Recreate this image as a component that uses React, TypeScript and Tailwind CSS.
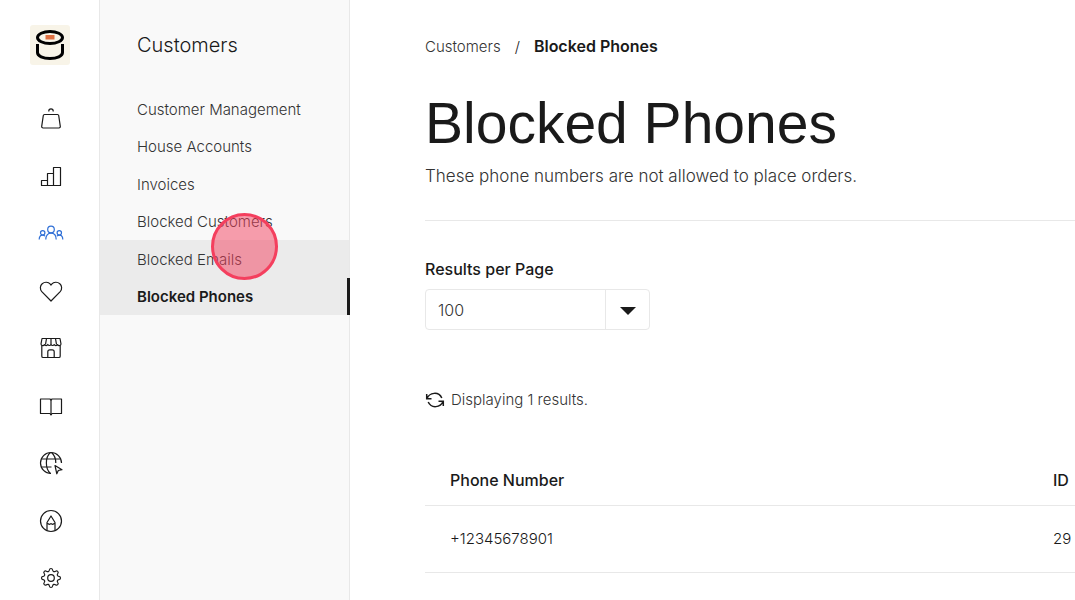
import type { ReactNode } from 'react';

interface RailItem {
  label: string;
  active?: boolean;
  icon: ReactNode;
}

const railItems: RailItem[] = [
  {
    label: 'Orders',
    icon: (
      <>
        <path d="M5.5 8.5h13a1.2 1.2 0 0 1 1.2 1l1.6 10.8a1.4 1.4 0 0 1-1.4 1.7H4.1a1.4 1.4 0 0 1-1.4-1.7L4.3 9.5a1.2 1.2 0 0 1 1.2-1z" />
        <path d="M9.8 5.5V5a2.2 2.2 0 0 1 4.4 0v.5" />
      </>
    ),
  },
  {
    label: 'Reports',
    icon: <path d="M2.5 16.5h6v5h-6zM8.5 9.5h6v12h-6zM14.5 3.5h7v18h-7z" />,
  },
  {
    label: 'Customers',
    active: true,
    icon: (
      <>
        <circle cx="12" cy="8.5" r="3.3" />
        <path d="M6.8 18.5c0-4 2-6.3 5.2-6.3s5.2 2.3 5.2 6.3" />
        <circle cx="3.7" cy="11.8" r="2.2" />
        <path d="M.2 18.5c0-2.5 1-4.3 3.3-4.3 1.2 0 2 .4 2.5 1" />
        <circle cx="20.3" cy="11.8" r="2.2" />
        <path d="M23.8 18.5c0-2.5-1-4.3-3.3-4.3-1.2 0-2 .4-2.5 1" />
      </>
    ),
  },
  {
    label: 'Loyalty',
    icon: <path d="M12 22 2.8 12.7C.7 10.3 1 6.6 3.2 4.7c2.4-2.1 6-1.9 8.1.5l.7.9.7-.9c2.1-2.4 5.7-2.6 8.1-.5 2.2 1.9 2.5 5.6.4 8z" />,
  },
  {
    label: 'Store',
    icon: (
      <>
        <path d="M3 2.5h18l1 5.5a1.8 1.8 0 0 1-3.5.5 1.8 1.8 0 0 1-3.3 0 1.8 1.8 0 0 1-3.2 0 1.8 1.8 0 0 1-3.2 0 1.8 1.8 0 0 1-3.3 0A1.8 1.8 0 0 1 2 8z" />
        <path d="M7.5 2.5l-1 6M12 2.5v6M16.5 2.5l1 6" />
        <path d="M2.8 9.5v10.7c0 .8.5 1.3 1.3 1.3h15.8c.8 0 1.3-.5 1.3-1.3V9.5" />
        <path d="M8.8 21.5v-5.7c0-1.3.8-2 2-2h2.4c1.2 0 2 .7 2 2v5.7" />
      </>
    ),
  },
  {
    label: 'Menu',
    icon: (
      <>
        <path d="M1.5 5H11l1 1 1-1h9.5v14.500H13l-1 1.500-1-1.500H1.500z" />
        <path d="M12 6v15" />
      </>
    ),
  },
  {
    label: 'Website',
    icon: (
      <>
        <path d="M12 22.5A10.5 10.5 0 1 1 22.5 12" />
        <path d="M11.5 22.5C6 18 6 6 11.5 1.5M12.5 1.5c3 2.6 4.3 6.2 4.3 10.5M2.3 8h19.4M1.8 16h10.7" />
        <path d="M16 14.5l7 4.2-3.7.8-1.5 3.3z" />
      </>
    ),
  },
  {
    label: 'Design',
    icon: (
      <>
        <circle cx="12" cy="12" r="10.5" />
        <path d="M8 21.5v-8L12 7l4 6.5v8" />
        <path d="M8 14.5c1.3 0 1.3.8 2.7.8.7 0 .7-.8 1.3-.8s.6.8 1.3.8c1.4 0 1.4-.8 2.7-.8" />
      </>
    ),
  },
  {
    label: 'Settings',
    icon: (
      <>
        <circle cx="12" cy="12" r="3.3" />
        <path d="M10.4 3c.3-2 2.900-2 3.200 0 .3 1.700 1.500 2.200 2.900 1.200 1.600-1.200 3.500.700 2.300 2.300-1 1.400-.5 2.600 1.200 2.900 2 .3 2 2.900 0 3.200-1.700.3-2.200 1.500-1.200 2.900 1.200 1.600-.7 3.500-2.300 2.300-1.400-1-2.600-.5-2.900 1.200-.3 2-2.900 2-3.200 0-.3-1.700-1.500-2.200-2.900-1.200-1.600 1.200-3.500-.7-2.300-2.300 1-1.400.5-2.600-1.200-2.900-2-.3-2-2.900 0-3.200 1.700-.3 2.200-1.500 1.200-2.900C4 4.900 5.900 3 7.500 4.200c1.400 1 2.600.5 2.900-1.200z" transform="translate(0 1)" />
      </>
    ),
  },
];

const customerLinks = [
  { label: 'Customer Management' },
  { label: 'House Accounts' },
  { label: 'Invoices' },
  { label: 'Blocked Customers' },
  { label: 'Blocked Emails', hovered: true },
  { label: 'Blocked Phones', active: true },
];

const blockedPhones = [{ id: 29, phone: '+12345678901' }];

function Logo() {
  return (
    <svg className="size-10" viewBox="0 0 40 40" fill="none" aria-hidden="true">
      <rect width="40" height="40" rx="3" fill="#f8f4e8" />
      <ellipse cx="20" cy="12.5" rx="12.5" ry="6" stroke="#000" strokeWidth="3" />
      <rect x="15.5" y="10" width="9" height="4.5" fill="#df7042" />
      <path d="M7.5 19v8.5c0 3.5 5.5 6 12.5 6s12.500-2.500 12.500-6V19" stroke="#000" strokeWidth="3" />
    </svg>
  );
}

function RefreshIcon() {
  return (
    <svg className="size-5" viewBox="0 0 20 20" fill="none" stroke="#1a1a1a" strokeWidth="1.5" aria-hidden="true">
      <path d="M1.7 4v4.7h4.8M2 8.5C4.5 2.5 13.5 1 16.8 8" />
      <path d="M18.3 16v-4.7h-4.8M18 11.5c-2.5 6-11.5 7.5-14.8.5" />
    </svg>
  );
}

export default function App() {
  return (
    <div className="flex min-h-screen overflow-x-hidden bg-white font-['Inter',sans-serif] text-[15px] font-light text-[#1a1a1a]">
      {/* Icon rail */}
      <aside className="flex w-[100px] shrink-0 flex-col items-center border-r border-[#e8e8e8] pt-[25px] pb-[10px] pl-px">
        <a href="#home" aria-label="Home">
          <Logo />
        </a>
        <nav aria-label="Main" className="mt-[41px] flex flex-1 flex-col justify-between pl-px">
          {railItems.map((item) => (
            <a key={item.label} href="#" aria-label={item.label} className={item.active ? 'text-[#2f6fd6]' : 'text-[#1a1a1a]'}>
              <svg
                className="size-6 overflow-visible"
                viewBox="0 0 24 24"
                fill="none"
                stroke="currentColor"
                strokeWidth="1.2"
                strokeLinejoin="round"
                aria-hidden="true"
              >
                {item.icon}
              </svg>
            </a>
          ))}
        </nav>
      </aside>

      {/* Section menu */}
      <aside className="w-[250px] shrink-0 border-r border-[#e8e8e8] bg-[#f9f9f9] pt-[30px]">
        <h2 className="px-[37px] text-xl leading-[30px]">Customers</h2>
        <nav aria-label="Customers" className="relative mt-[30px] grid h-[225px] grid-rows-6">
          {customerLinks.map((link) => (
            <a
              key={link.label}
              href="#"
              className={
                link.active
                  ? '-mr-px flex items-center border-r-3 border-[#1a1a1a] bg-[#ebebeb] pt-0.5 pl-[37px] font-semibold'
                  : link.hovered
                    ? 'flex items-center bg-[#ebebeb] pt-0.5 pl-[37px] text-[#333]'
                    : 'flex items-center pt-0.5 pl-[37px] text-[#333]'
              }
            >
              {link.label}
            </a>
          ))}
          {/* Click marker */}
          <span className="pointer-events-none absolute top-[123px] left-[111px] size-[67px] rounded-full border-3 border-[#f43f5e] bg-[#f43f5e]/50" />
        </nav>
      </aside>

      {/* Page */}
      <main className="min-w-0 flex-1 pt-[34px] pl-[75px]">
        <nav aria-label="Breadcrumb" className="flex items-baseline gap-[14px] leading-6">
          <a href="#" className="text-[#333]">Customers</a>
          <span>/</span>
          <span className="text-base leading-6 font-semibold">Blocked Phones</span>
        </nav>

        <header className="border-b border-[#e8e8e8] pb-[30px]">
          <h1 className="mt-7 font-['Liberation_Sans',sans-serif] text-[57px] leading-[72px] font-normal whitespace-nowrap">
            Blocked Phones
          </h1>
          <p className="mt-[3px] text-[17px] leading-7 text-[#333]">These phone numbers are not allowed to place orders.</p>
        </header>

        <div className="mt-9 w-[225px]">
          <label htmlFor="per-page" className="block text-base leading-6 font-medium">
            Results per Page
          </label>
          <div className="relative mt-2">
            <select
              id="per-page"
              defaultValue="100"
              className="block h-[41px] w-full appearance-none rounded-sm border border-[#e8e8e8] bg-white pl-3 text-base text-[#333]"
            >
              <option>25</option>
              <option>50</option>
              <option>100</option>
            </select>
            <span className="pointer-events-none absolute inset-y-0 right-0 flex w-[45px] items-center justify-center border-l border-[#e8e8e8]">
              <svg className="mt-0.5 h-2 w-4" viewBox="0 0 16 8" fill="#1a1a1a" aria-hidden="true">
                <path d="M0 0h16L8 8z" />
              </svg>
            </span>
          </div>
        </div>

        <div className="mt-[58px] flex items-center gap-1.5 leading-6">
          <button type="button" aria-label="Refresh">
            <RefreshIcon />
          </button>
          <p className="text-[#333]">Displaying 1 results.</p>
        </div>

        <table className="mt-[42px] w-full text-left">
          <thead className="text-base">
            <tr className="h-[51px] border-b border-[#e8e8e8]">
              <th className="pt-0.5 pl-[25px] font-medium">Phone Number</th>
              <th className="w-[22px] pt-0.5 font-medium">ID</th>
            </tr>
          </thead>
          <tbody>
            {blockedPhones.map((row) => (
              <tr key={row.id} className="h-[67px] border-b border-[#e8e8e8]">
                <td className="pt-0.5 pl-[25px]">{row.phone}</td>
                <td className="pt-0.5">{row.id}</td>
              </tr>
            ))}
          </tbody>
        </table>
      </main>
    </div>
  );
}
